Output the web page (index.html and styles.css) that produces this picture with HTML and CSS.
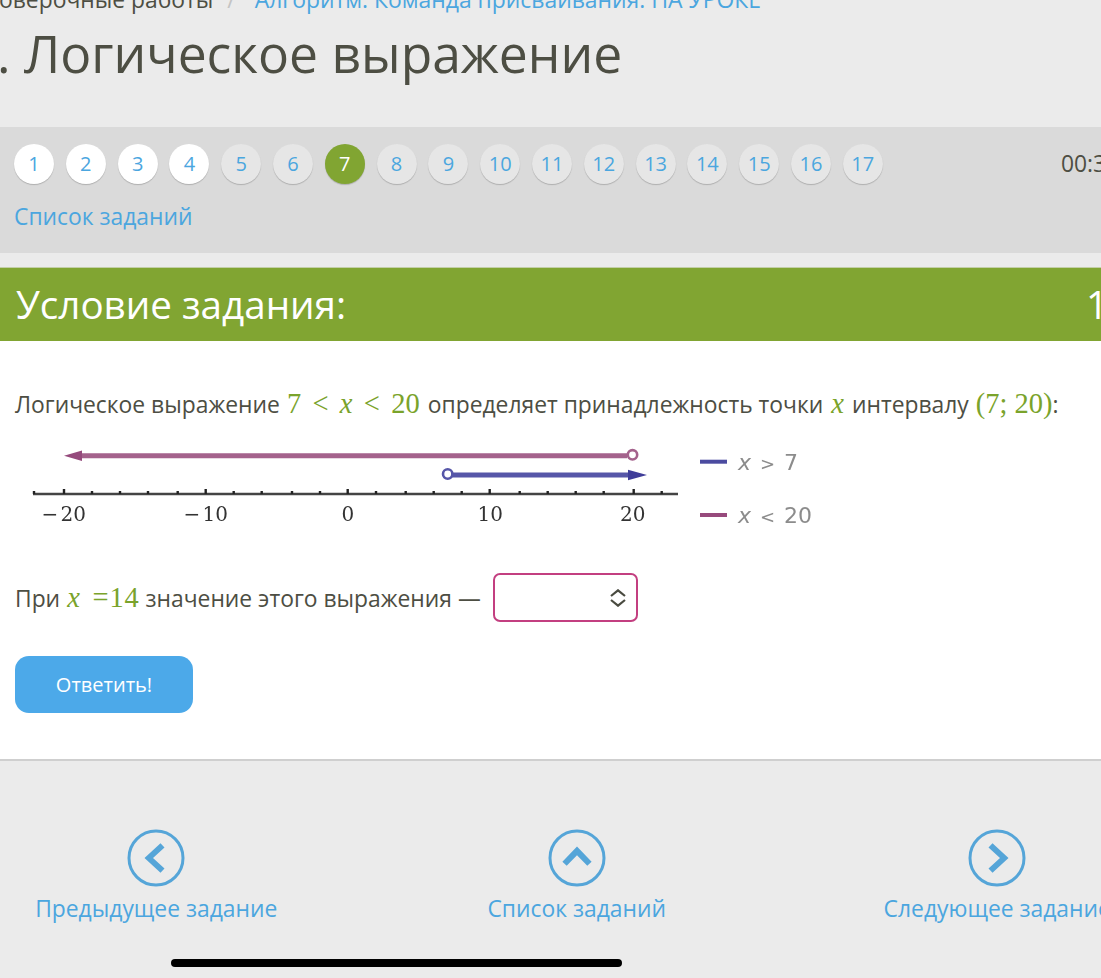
FILE: index.html
```html
<!DOCTYPE html>
<html lang="ru">
<head>
  <meta charset="UTF-8">
  <title>Логическое выражение</title>
  <meta name="viewport" content="width=device-width, initial-scale=1.0">
  <link rel="stylesheet" href="styles.css">
</head>
<body>
  <header class="top">
    <div class="breadcrumb">
      <span>оверочные работы</span>
      <span class="sep">/</span>
      <a href="#">Алгоритм. Команда присваивания. НА УРОКЕ</a>
    </div>
    <h1>. Логическое выражение</h1>
  </header>

  <nav class="tasks">
    <div class="tasks-row">
      <ul class="numbers">
        <li class="done">1</li>
        <li class="done">2</li>
        <li class="done">3</li>
        <li class="done">4</li>
        <li>5</li>
        <li>6</li>
        <li class="current">7</li>
        <li>8</li>
        <li>9</li>
        <li>10</li>
        <li>11</li>
        <li>12</li>
        <li>13</li>
        <li>14</li>
        <li>15</li>
        <li>16</li>
        <li>17</li>
      </ul>
      <span class="timer">00:3</span>
    </div>
    <a class="list-link" href="#">Список заданий</a>
  </nav>

  <main class="card">
    <div class="card-head">
      <h2>Условие задания:</h2>
      <span class="points">1</span>
    </div>
    <div class="card-body">
      <p class="line condition">
        <span>Логическое выражение</span>
        <span class="math m-ineq">7 &lt; <i>x</i> &lt; 20</span>
        <span class="w-mid">определяет принадлежность точки</span>
        <span class="math m-x"><i>x</i></span>
        <span class="w-int">интервалу</span>
        <span class="math m-int">(7; 20)</span><span>:</span>
      </p>

      <svg class="plot" width="840" height="100" viewBox="0 440 840 100">
        <!-- x < 20 -->
        <path d="M78 455.7H627" stroke="#a4628c" stroke-width="5"/>
        <path d="M64 455.7L82 450.5V461Z" fill="#954a7c"/>
        <circle cx="632.5" cy="454.8" r="4.7" fill="#fff" stroke="#a4628c" stroke-width="2.6"/>
        <!-- x > 7 -->
        <path d="M452 475H632" stroke="#5656a8" stroke-width="5"/>
        <path d="M647 475L628 469.7V480.3Z" fill="#3f3d99"/>
        <circle cx="447.7" cy="474" r="4.7" fill="#fff" stroke="#5656a8" stroke-width="2.6"/>
        <!-- axis -->
        <path d="M33 494H678" stroke="#444" stroke-width="2.4"/>
        <path d="M64 489V494M205.7 489V494M347.7 489V494M489.7 489V494M633.7 489V494" stroke="#222" stroke-width="2.4"/>
        <path d="M34 491V494M92 491V494M120 491V494M148 491V494M177.7 491V494M233.7 491V494M261.7 491V494M292 491V494M320 491V494M376 491V494M405.7 491V494M433.7 491V494M461.7 491V494M519.7 491V494M547.7 491V494M575.7 491V494M603.7 491V494M661.7 491V494" stroke="#222" stroke-width="2.4"/>
        <g class="axis-labels">
          <text x="41.5" y="521">−<tspan x="60.5">20</tspan></text>
          <text x="183.5" y="521">−<tspan x="202.5">10</tspan></text>
          <text x="341.5" y="521">0</text>
          <text x="477.5" y="521">10</text>
          <text x="620" y="521">20</text>
        </g>
        <path d="M700 461.7H727" stroke="#4b4ba0" stroke-width="4"/>
        <path d="M700 515H727" stroke="#974a7c" stroke-width="4"/>
        <g class="legend">
          <text x="738" y="469.5"><tspan font-style="italic">x</tspan><tspan x="760" class="op">&gt;</tspan><tspan x="784">7</tspan></text>
          <text x="738" y="523"><tspan font-style="italic">x</tspan><tspan x="760" class="op">&lt;</tspan><tspan x="784">20</tspan></text>
        </g>
      </svg>

      <div class="line answer">
        <span>При</span>
        <span class="math m-eq"><i>x</i> =14</span>
        <span class="w-val">значение этого выражения —</span>
        <span class="select">
          <svg width="18" height="18" viewBox="0 0 18 18">
            <path d="M2 7L9 1.3L16 7M2 11L9 16.7L16 11" fill="none" stroke="#4a4b40" stroke-width="2.2"/>
          </svg>
        </span>
      </div>

      <button class="submit">Ответить!</button>
    </div>
  </main>

  <footer class="pager">
    <a href="#">
      <svg width="58" height="58" viewBox="0 0 58 58">
        <circle cx="29" cy="29" r="27"/>
        <path d="M17.5 29L33.5 14.2L37.5 18.6L26 29L37.5 39.4L33.5 43.8Z"/>
      </svg>
      <span>Предыдущее задание</span>
    </a>
    <a href="#">
      <svg width="58" height="58" viewBox="0 0 58 58">
        <circle cx="29" cy="29" r="27"/>
        <path d="M29 17.4L43.6 32.7L39.3 36.8L29 26.2L18.7 36.8L14.4 32.7Z"/>
      </svg>
      <span>Список заданий</span>
    </a>
    <a href="#">
      <svg width="58" height="58" viewBox="0 0 58 58">
        <circle cx="29" cy="29" r="27"/>
        <path d="M40.5 29L24.5 14.2L20.5 18.6L32 29L20.5 39.4L24.5 43.8Z"/>
      </svg>
      <span>Следующее задание</span>
    </a>
  </footer>
  <div class="home-bar"></div>
</body>
</html>
```

FILE: styles.css
```css
html, body {
  height: 100%;
  margin: 0;
}

body {
  background: #ebebeb;
  color: #4d4e43;
  font-family: "Open Sans", "Noto Sans", sans-serif;
  font-size: 22.85px;
  overflow: hidden;
}

a {
  color: #4ba6df;
  text-decoration: none;
}

.top {
  height: 127px;
  overflow: hidden;
}

.breadcrumb {
  display: flex;
  height: 14px;
  line-height: 34px;
  margin-top: -17px;
  padding-bottom: 16px;
  white-space: nowrap;
}

.breadcrumb span:first-child {
  margin-left: -1px;
}

.breadcrumb .sep {
  color: #c4c4c4;
  margin: 0 19px 0 14px;
}

.breadcrumb a {
  font-size: 22.9px;
}

h1 {
  margin: 5px 0 0 -3px;
  font-size: 51.6px;
  line-height: 70px;
  font-weight: 400;
  white-space: nowrap;
}

.tasks {
  box-sizing: border-box;
  height: 126px;
  padding: 17px 0 0 14px;
  background: #dadada;
}

.tasks-row {
  display: flex;
  height: 40px;
  white-space: nowrap;
}

.numbers {
  display: flex;
  flex: none;
  gap: 11.8px;
  width: 1047px;
  margin: 0;
  padding: 0;
  list-style: none;
}

.numbers li {
  flex: none;
  width: 40px;
  height: 40px;
  border-radius: 50%;
  background: #e6e6e6;
  box-shadow: 0 1px 1px rgba(0, 0, 0, .2);
  color: #4ba6df;
  font-size: 20px;
  line-height: 40px;
  text-align: center;
}

.numbers .done {
  background: #fff;
}

.numbers .current {
  background: #81a532;
  color: #fff;
}

.timer {
  line-height: 40px;
}

.list-link {
  display: block;
  width: fit-content;
  margin-top: 16px;
  line-height: 34px;
}

.card {
  box-sizing: border-box;
  height: 494px;
  margin-top: 14px;
  background: #fff;
  border-top: 1px solid #c3cfa8;
  border-bottom: 2px solid #cfcfcf;
}

.card-head {
  display: flex;
  height: 73px;
  padding-left: 16px;
  background: #81a532;
  color: #fff;
  font-size: 38.6px;
  line-height: 73px;
}

h2 {
  flex: none;
  width: 1070px;
  margin: 0;
  font-size: inherit;
  font-weight: 400;
}

.card-body {
  padding: 42px 0 0 15px;
}

.line {
  display: flex;
  align-items: baseline;
  margin: 0;
  line-height: 40px;
  white-space: nowrap;
}

.math {
  color: #7aa32b;
  font-family: "Liberation Serif", serif;
  font-size: 28.5px;
}

.condition {
  height: 39px;
  padding-top: 1px;
}

.m-ineq {
  margin-left: 7px;
  word-spacing: 4.2px;
}

.w-mid {
  margin-left: 8px;
}

.m-x {
  margin-left: 8px;
}

.w-int {
  margin-left: 8px;
}

.m-int {
  margin-left: 7px;
}

.plot {
  display: block;
  margin: 17px 0 0 -15px;
  filter: blur(.6px);
}

.axis-labels {
  fill: #333;
  font-family: "DejaVu Serif", serif;
  font-size: 20px;
}

.legend {
  fill: #8c8c8c;
  font-family: "DejaVu Sans", sans-serif;
  font-size: 22px;
}

.legend .op {
  font-size: 18px;
}

.answer {
  height: 49px;
  margin-top: 33px;
  line-height: 49px;
}

.m-eq {
  margin-left: 7px;
  word-spacing: 4px;
  letter-spacing: .8px;
}

.w-val {
  margin-left: 6px;
}

.select {
  box-sizing: border-box;
  display: flex;
  align-self: flex-start;
  align-items: center;
  justify-content: flex-end;
  width: 145px;
  height: 49px;
  margin-left: 12px;
  padding-right: 9px;
  border: 2px solid #c33f80;
  border-radius: 7px;
}

.submit {
  display: block;
  width: 178px;
  height: 57px;
  margin-top: 34px;
  padding: 0;
  border: 0;
  border-radius: 14px;
  background: #4ca9e9;
  color: #fff;
  font-family: inherit;
  font-size: 20px;
}

.pager {
  display: grid;
  grid-template-columns: repeat(3, 420.5px);
  margin: 68px 0 0 -54px;
}

.pager a {
  display: flex;
  flex-direction: column;
  align-items: center;
  line-height: 32px;
  white-space: nowrap;
}

.pager svg {
  margin-bottom: 6px;
  fill: #55a5d8;
}

.pager circle {
  fill: none;
  stroke: #55a5d8;
  stroke-width: 3;
}

.home-bar {
  width: 451px;
  height: 8px;
  margin: 34px 0 0 171px;
  border-radius: 4px;
  background: #000;
}
```
